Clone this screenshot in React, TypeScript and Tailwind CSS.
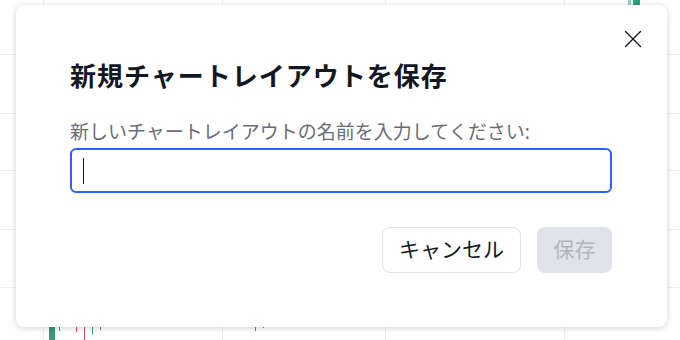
import { X } from 'lucide-react';

const vLines = [43, 222, 385, 564];
const hLines = [54, 113, 170, 229, 287];

// faint chart that sits behind the modal
const ChartBackdrop = () => (
  <svg className="absolute inset-0" width="680" height="340" viewBox="0 0 680 340">
    {vLines.map(x => (
      <line key={`v${x}`} x1={x + 0.5} y1={0} x2={x + 0.5} y2={340} stroke="#eeeff2" strokeWidth={1} />
    ))}
    {hLines.map(y => (
      <line key={`h${y}`} x1={0} y1={y + 0.5} x2={680} y2={y + 0.5} stroke="#eeeff2" strokeWidth={1} />
    ))}
    {/* candles peeking out */}
    <rect x={628} y={0} width={3} height={6} fill="#8fd3c0" />
    <rect x={633} y={0} width={7} height={6} fill="#26a17f" />
    <rect x={49} y={320} width={6} height={20} fill="#3a9a7a" />
    <rect x={59} y={320} width={1} height={11} fill="#3a9a7a" />
    <rect x={76} y={320} width={1} height={12} fill="#e0544f" />
    <rect x={84} y={320} width={1} height={20} fill="#e0544f" />
    <rect x={92} y={320} width={1} height={14} fill="#3a9a7a" />
    <rect x={100} y={320} width={1} height={10} fill="#3a9a7a" />
    <rect x={255} y={320} width={1} height={11} fill="#e0544f" />
    <rect x={263} y={320} width={1} height={8} fill="#3a9a7a" />
  </svg>
);

const App = () => {
  return (
    <div
      className="relative w-[680px] h-[340px] overflow-hidden bg-white"
      style={{ fontFamily: '"Noto Sans", "Noto Sans CJK JP", sans-serif' }}
    >
      <ChartBackdrop />

      {/* Modal */}
      <div className="absolute inset-0 pl-[16px] pt-[5px]">
        <div className="relative w-[651px] h-[322px] bg-white rounded-lg shadow-[0_1px_6px_rgba(0,0,0,0.18)] px-[54px] pt-[55px]">
          <button className="absolute top-[23px] right-[23px] w-[22px] h-[22px] flex items-center justify-center text-[#131722]">
            <X className="w-[30px] h-[30px] shrink-0" strokeWidth={1.1} />
          </button>

          <h2 className="text-[26px] leading-[32px] font-bold tracking-[1px] text-[#131722]">
            新規チャートレイアウトを保存
          </h2>

          <label className="block mt-[28px] text-[19px] leading-[24px] text-[#6a6d78]">
            新しいチャートレイアウトの名前を入力してください:
          </label>

          <div className="mt-[4px] h-[45px] w-[542px] flex items-center pl-[11px] rounded-md border-2 border-[#2962ff]">
            <span className="block w-px h-[26px] bg-[#131722]" />
          </div>

          <div className="mt-[34px] flex justify-end gap-4 pr-[1px]">
            <button className="w-[139px] h-[46px] rounded-lg border border-[#e0e3eb] bg-white text-[21px] text-[#131722]">
              キャンセル
            </button>
            <button className="w-[75px] h-[46px] rounded-lg bg-[#e0e3eb] text-[21px] text-[#b2b5be]">
              保存
            </button>
          </div>
        </div>
      </div>
    </div>
  );
};

export default App;
